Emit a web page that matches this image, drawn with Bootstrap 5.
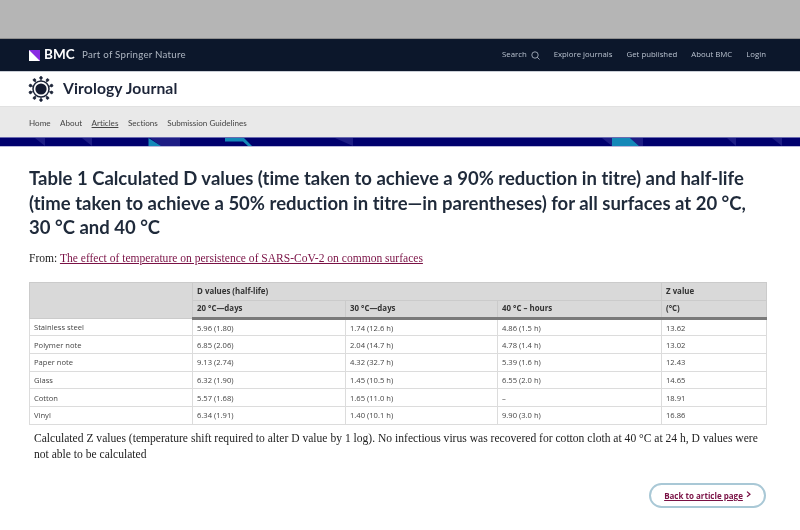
<!DOCTYPE html>
<html lang="en">
<head>
<meta charset="utf-8">
<title>Table 1</title>
<link href="https://cdn.jsdelivr.net/npm/bootstrap@5.3.0/dist/css/bootstrap.min.css" rel="stylesheet">
<style>
html,body{height:530px;overflow:hidden;background:#fff}
body{font-family:"Open Sans","Liberation Sans",sans-serif;color:#222;filter:blur(.4px)}
body *{font-variant-ligatures:none !important}
.topgap{height:39px;background:#b5b5b5;border-bottom:1px solid #8e8e8e}
.brandbar{height:33px;background:#0c172b;padding:0 34px 0 29px;border-bottom:1px solid #c9ced6}
.bmc-word{font:700 13.5px/1 Lato,sans-serif;color:#fff;margin-left:4px}
.bmc-part{font:400 9.7px/1 Lato,sans-serif;color:#aeb6c2;letter-spacing:.25px;margin-left:7.5px}
.toplinks{gap:14px}
.toplinks a{font:400 7.8px/1 "Open Sans",sans-serif;color:#b9c2cf;text-decoration:none}
.journalbar{height:34px;background:#fff;padding-left:28px;gap:9px}
.jname{font:700 15.7px/1 Lato,sans-serif;color:#1c2438;letter-spacing:.1px}
.sitenav{height:31px;background:#e9e9e9;padding:2px 0 0 29px;gap:9.5px;border-top:1px solid #e1e1e1}
.sitenav a{font:400 8.1px/1 Lato,sans-serif;color:#444;text-decoration:none}
.sitenav a.onpage{text-decoration:underline}
.band{display:block;height:10px;width:800px;border-top:1px solid #6a6ab0;border-bottom:1px solid #b8b8dc}
.pagebody{padding:19px 34px 0 29px}
.ttl{font:700 18.5px/24.5px Lato,sans-serif;color:#1f2a3a;margin:0 0 12px;max-width:726px}
.fromline{font:400 11.56px/14px "Liberation Serif",serif;color:#222;margin:0 0 16px}
.fromline a{color:#7a1145}
.datatable{width:737px;table-layout:fixed;border-collapse:collapse;margin:0;font:400 7.6px/1 "Open Sans",sans-serif;color:#444;border:1px solid #d4d4d4}
.datatable th,.datatable td{padding:1px 4px 0;border:1px solid #dcdcdc;vertical-align:middle;text-align:left}
.datatable td{height:17.7px;padding-top:2px}
.datatable th{background:#d9d9d9;font-weight:700;font-size:7.9px;color:#333;border-color:#cbcbcb;height:18px}
.datatable thead tr:last-child th{border-bottom:3px solid #7a7a7a}
.footnote{font:400 11.58px/16px "Liberation Serif",serif;color:#222;margin:6px 0 0 5px;width:728px}
.backwrap{margin-top:20px}
.backbtn{width:117px;height:25px;border:2px solid #a9c8d6;border-radius:13px;font:700 8px/1 "Open Sans",sans-serif;color:#7a1145;background:#fff;gap:3px;padding-top:2px}
.backbtn span{text-decoration:underline}
.backbtn svg{margin-top:-3px}
</style>
</head>
<body>
<div class="topgap"></div>
<header class="brandbar d-flex align-items-center justify-content-between">
  <div class="d-flex align-items-center">
    <svg width="11" height="11" viewBox="0 0 11 11" aria-hidden="true"><rect width="11" height="11" fill="#fff"/><path d="M0 0H11V11Z" fill="#8a2be2"/></svg>
    <span class="bmc-word">BMC</span>
    <span class="bmc-part">Part of Springer Nature</span>
  </div>
  <nav class="toplinks d-flex align-items-center">
    <a href="#" class="d-flex align-items-center gap-1">Search
      <svg width="9" height="9" viewBox="0 0 9 9" fill="none" stroke="#b9c2cf" stroke-width=".8" aria-hidden="true"><circle cx="4" cy="4" r="3.2"/><path d="M6.3 6.3 8.5 8.5"/></svg></a>
    <a href="#">Explore journals</a>
    <a href="#">Get published</a>
    <a href="#">About BMC</a>
    <a href="#">Login</a>
  </nav>
</header>
<div class="journalbar d-flex align-items-center">
  <svg width="26" height="26" viewBox="0 0 26 26" aria-hidden="true">
    <circle cx="13" cy="13" r="5.6" fill="#141b30"/>
    <circle cx="13" cy="13" r="8" fill="none" stroke="#1c2438" stroke-width="1.5"/>
    <g fill="#1c2438" stroke="#1c2438" stroke-width=".8">
      <g id="spk"><path d="M13 5V2.5"/><circle cx="13" cy="1.9" r="1.3"/></g>
      <use href="#spk" transform="rotate(36 13 13)"/><use href="#spk" transform="rotate(72 13 13)"/><use href="#spk" transform="rotate(108 13 13)"/><use href="#spk" transform="rotate(144 13 13)"/><use href="#spk" transform="rotate(180 13 13)"/><use href="#spk" transform="rotate(216 13 13)"/><use href="#spk" transform="rotate(252 13 13)"/><use href="#spk" transform="rotate(288 13 13)"/><use href="#spk" transform="rotate(324 13 13)"/>
    </g>
  </svg>
  <span class="jname">Virology Journal</span>
</div>
<nav class="sitenav d-flex align-items-center">
  <a href="#">Home</a><a href="#">About</a><a href="#" class="onpage">Articles</a><a href="#">Sections</a><a href="#">Submission Guidelines</a>
</nav>
<svg class="band" viewBox="0 0 800 8" preserveAspectRatio="none" aria-hidden="true">
  <rect width="800" height="8" fill="#00006e"/>
  <g fill="#1d1d85"><path d="M35 0H45V8Z"/><path d="M82 0H92V8Z"/><path d="M150 0H180V8H161Z"/><path d="M335 0H353V8Z"/><path d="M602 0H612V8Z"/><path d="M630 0H643V8H639Z"/><path d="M727 0H736V8Z"/><path d="M772 0H782V8Z"/></g>
  <g fill="#1488b8"><path d="M148.5 0 161 8H148.5Z"/><path d="M225 0H244L252 8H248L243 3.5H225Z"/><path d="M612 0H630L639 8H612Z"/></g>
</svg>
<main class="pagebody">
  <h1 class="ttl">Table 1 Calculated D values (time taken to achieve a 90% reduction in titre) and half-life (time taken to achieve a 50% reduction in titre—in parentheses) for all surfaces at 20 °C, 30 °C and 40 °C</h1>
  <p class="fromline">From: <a href="#">The effect of temperature on persistence of SARS-CoV-2 on common surfaces</a></p>
  <table class="datatable">
    <colgroup><col style="width:163px"><col style="width:153px"><col style="width:152px"><col style="width:164px"><col style="width:105px"></colgroup>
    <thead>
      <tr><th rowspan="2"></th><th colspan="3">D values (half-life)</th><th>Z value</th></tr>
      <tr><th>20 °C—days</th><th>30 °C—days</th><th>40 °C – hours</th><th>(°C)</th></tr>
    </thead>
    <tbody>
      <tr><td>Stainless steel</td><td>5.96 (1.80)</td><td>1.74 (12.6 h)</td><td>4.86 (1.5 h)</td><td>13.62</td></tr>
      <tr><td>Polymer note</td><td>6.85 (2.06)</td><td>2.04 (14.7 h)</td><td>4.78 (1.4 h)</td><td>13.02</td></tr>
      <tr><td>Paper note</td><td>9.13 (2.74)</td><td>4.32 (32.7 h)</td><td>5.39 (1.6 h)</td><td>12.43</td></tr>
      <tr><td>Glass</td><td>6.32 (1.90)</td><td>1.45 (10.5 h)</td><td>6.55 (2.0 h)</td><td>14.65</td></tr>
      <tr><td>Cotton</td><td>5.57 (1.68)</td><td>1.65 (11.0 h)</td><td>–</td><td>18.91</td></tr>
      <tr><td>Vinyl</td><td>6.34 (1.91)</td><td>1.40 (10.1 h)</td><td>9.90 (3.0 h)</td><td>16.86</td></tr>
    </tbody>
  </table>
  <p class="footnote">Calculated Z values (temperature shift required to alter D value by 1 log). No infectious virus was recovered for cotton cloth at 40 °C at 24 h, D values were not able to be calculated</p>
  <div class="backwrap d-flex justify-content-end">
    <a href="#" class="backbtn d-flex align-items-center justify-content-center text-decoration-none"><span>Back to article page</span>
      <svg width="5" height="7" viewBox="0 0 5 7" fill="none" stroke="#7a1145" stroke-width="1.2" aria-hidden="true"><path d="M1 .6 4 3.2 1 5.8"/></svg></a>
  </div>
</main>
<script src="https://cdn.jsdelivr.net/npm/bootstrap@5.3.0/dist/js/bootstrap.bundle.min.js"></script>
</body>
</html>
